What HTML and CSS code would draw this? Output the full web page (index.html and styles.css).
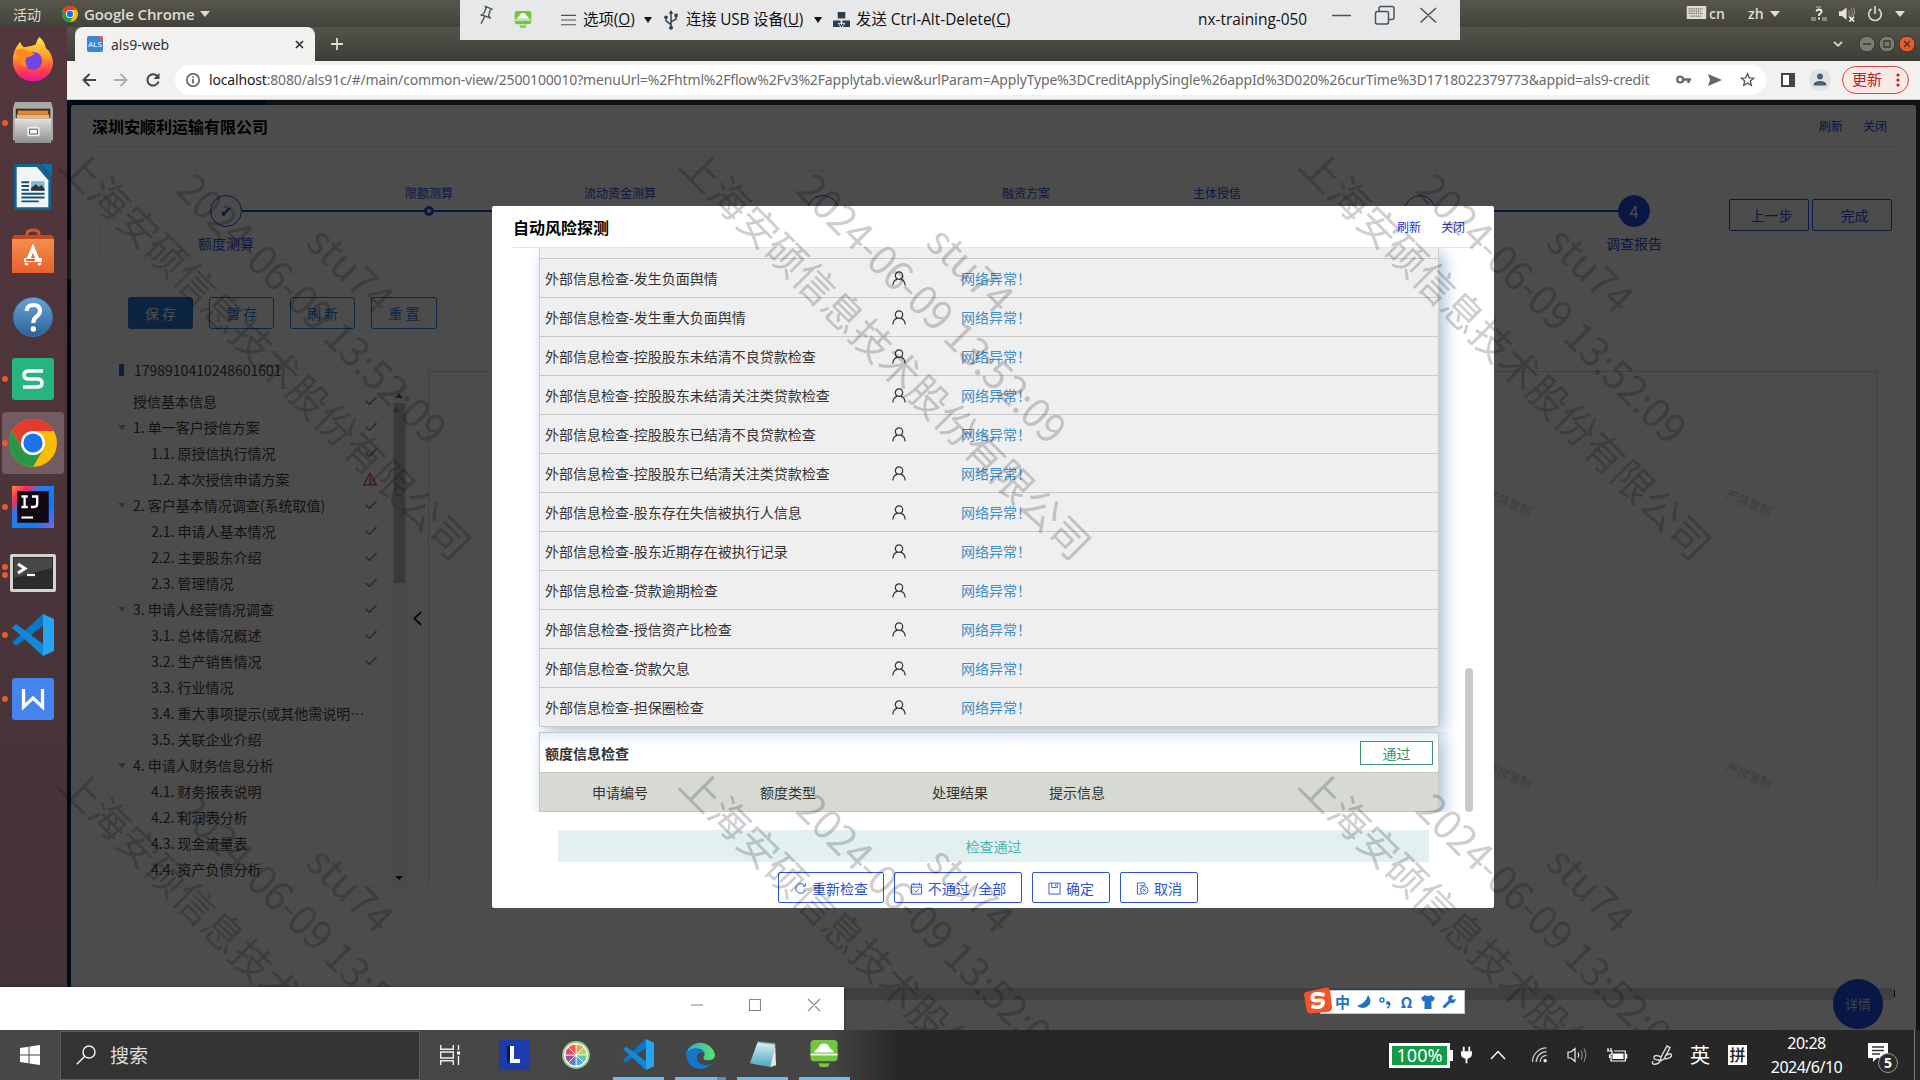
FILE: index.html
```html
<!DOCTYPE html>
<html lang="zh-CN">
<head>
<meta charset="utf-8">
<title>als9-web</title>
<link rel="stylesheet" href="styles.css">
</head>
<body>
<svg class="defs" width="0" height="0" aria-hidden="true">
  <defs>
    <linearGradient id="g-fire" x1="0" y1="0" x2="0" y2="1"><stop offset="0" stop-color="#ffe94a"/><stop offset=".45" stop-color="#ff9a26"/><stop offset=".75" stop-color="#ff3f4f"/><stop offset="1" stop-color="#e8159a"/></linearGradient>
    <linearGradient id="g-metal" x1="0" y1="0" x2="0" y2="1"><stop offset="0" stop-color="#e2e2e0"/><stop offset="1" stop-color="#8f8f8d"/></linearGradient>
    <linearGradient id="g-bag" x1="0" y1="0" x2="0" y2="1"><stop offset="0" stop-color="#f0904f"/><stop offset="1" stop-color="#e9612a"/></linearGradient>
    <linearGradient id="g-help" x1="0" y1="0" x2="0" y2="1"><stop offset="0" stop-color="#6aa3dc"/><stop offset="1" stop-color="#2b6396"/></linearGradient>
    <linearGradient id="g-ij" x1="0" y1="0" x2="1" y2="1"><stop offset="0" stop-color="#ff8a4a"/><stop offset=".2" stop-color="#fe2857"/><stop offset=".35" stop-color="#2a7bf0"/><stop offset=".7" stop-color="#087cfa"/><stop offset="1" stop-color="#8d5fe0"/></linearGradient>
    <linearGradient id="g-edge" x1="0" y1="0" x2="1" y2="0"><stop offset="0" stop-color="#2aa6e0"/><stop offset="1" stop-color="#5fe06b"/></linearGradient>
    <linearGradient id="g-pad" x1="0" y1="0" x2="0" y2="1"><stop offset="0" stop-color="#d9f1f5"/><stop offset="1" stop-color="#4aa8bb"/></linearGradient>
    <symbol id="i-chrome" viewBox="0 0 48 48">
      <circle cx="24" cy="24" r="24" fill="#fbbc05"/>
      <path d="M3.2 12A24 24 0 0 1 44.8 12H24A12 12 0 0 0 13.6 30z" fill="#e33b2e"/>
      <path d="M3.2 12A24 24 0 0 0 24 48L34.4 30A12 12 0 0 1 13.6 30z" fill="#2a9547"/>
      <circle cx="24" cy="24" r="12" fill="#fff"/><circle cx="24" cy="24" r="9.6" fill="#1a73e8"/>
    </symbol>
    <symbol id="i-vscode" viewBox="0 0 42 42">
      <path d="M31 0 6 23 0 28 4 32 31 12z" fill="#0a77c2"/>
      <path d="M0 14 4 10 31 30V42L6 19z" fill="#1388d6"/>
      <path d="M31 0 42 5V37L31 42z" fill="#26a4f2"/>
    </symbol>
    <symbol id="i-user" viewBox="0 0 14 15">
      <circle cx="7" cy="4.6" r="3.7" fill="none" stroke="#333" stroke-width="1.2"/>
      <path d="M.8 14.5Q1.2 9.3 5 8.3M13.2 14.5Q12.8 9.3 9 8.3" fill="none" stroke="#333" stroke-width="1.2"/>
    </symbol>
    <symbol id="i-tick" viewBox="0 0 12 10"><path d="M.5 4.5 4.2 8.5 11.5 1" fill="none" stroke="#3c9a6c" stroke-width="1.2"/></symbol>
    <symbol id="i-warn" viewBox="0 0 14 14"><path d="M7 1.2 13.3 12.8H.7zM7 5v4.2M7 10.2v1.3" fill="none" stroke="#d8403a" stroke-width="1.2"/></symbol>
    <symbol id="i-monitor" viewBox="0 0 28 30">
      <rect x="0" y="0" width="28" height="22" rx="4" fill="#73c63e"/><path d="M4 13C4 10 7 10 8 8 10 2 18 2 20 8 21 10 24 10 24 13z" fill="#fff"/>
      <rect y="14" width="28" height="2" fill="#e9f7df"/><path d="M8 24H20L18 28H10z" fill="#73c63e"/>
    </symbol>
  </defs>
</svg>

<div class="screen">
  <header class="topbar">
    <span class="activities">活动</span>
    <svg class="tb-chrome"><use href="#i-chrome"/></svg>
    <b class="app-name">Google Chrome</b>
    <i class="tri"></i>
    <span class="grow"></span>
    <svg class="kbd" viewBox="0 0 21 14"><rect width="21" height="14" fill="#dfdbd2"/><path d="M2 3h15M2 5.500h13M2 8h15M4 11h12" stroke="#6a685e" stroke-width="1.300" stroke-dasharray="1.200 .8"/></svg>
    <span class="ind cn">cn</span>
    <span class="ind zh">zh</span>
    <i class="tri t2"></i>
    <svg class="net" viewBox="0 0 16 15"><path d="M0 11h5v4H0zM11 11h5v4h-5zM5 0h5v2H5z" fill="#8b897f"/><path d="M5.500 5.500Q5.500 3.500 8 3.500T10.500 5.700Q10.500 7 8 8.500V10M8 11.500v2" fill="none" stroke="#eee" stroke-width="1.800"/></svg>
    <svg class="vol" viewBox="0 0 18 16"><path d="M0 5h3l5-4v13l-5-4H0z" fill="#e6e2da"/><path d="M10 4q2 3 0 7M12.500 2q3 5 0 9M15 1q3 5 0 9" fill="none" stroke="#8b897f" stroke-width="1.300"/><path d="M11 11l5 5M16 11l-5 5" stroke="#fff" stroke-width="1.600"/></svg>
    <svg class="pow" viewBox="0 0 16 16"><path d="M4.500 3A6.300 6.300 0 1 0 11.500 3M8 0V8" fill="none" stroke="#dfdbd2" stroke-width="1.600"/></svg>
    <i class="tri t3"></i>
  </header>

  <div class="desk">
    <nav class="dock">
      <div class="app"><svg viewBox="0 0 46 48"><path d="M30 0Q36 5 37 12Q44 17 45 28A22 21 0 0 1 1 27Q0 15 9 5Q10 9 13 11Q24 9 26 8Q27 3 30 0z" fill="url(#g-fire)"/><circle cx="23" cy="26" r="10" fill="#7543e0"/><path d="M2 16Q8 11 15 14Q20 16 25 18Q21 22 16 22Q13 27 17 33Q8 31 7 22z" fill="#ff8a1f"/></svg></div>
      <div class="app"><u></u><svg viewBox="0 0 44 46"><path d="M3 1H41L43 8V41H1V8z" fill="#a9a9a6"/><rect x="4" y="8" width="36" height="14" fill="#3a2a20"/><path d="M6 10h32v4H6z" fill="#e88435"/><path d="M5 14h34v4H5z" fill="#f3b268"/><path d="M3 18H41V44H3z" fill="url(#g-metal)"/><rect x="16" y="27" width="13" height="10" rx="2" fill="#ededeb"/><rect x="18.500" y="29.500" width="8" height="5" fill="#fff" stroke="#555"/></svg></div>
      <div class="app"><svg viewBox="0 0 42 48"><path d="M2 0H28L40 13V46Q40 48 38 48H3Q1 48 1 46V1z" fill="#12628f"/><path d="M4 3H25L37 17V45H4z" fill="#f2f5f7"/><path d="M29 0H41V13z" fill="#0a70ab"/><path d="M9 19h8M9 23h8M9 27h8M9 31h24M9 35h24M9 39h18" stroke="#174f70" stroke-width="2"/><rect x="19" y="18" width="14" height="10" fill="#7fb9da"/><path d="M19 28v-3l5-4 3 3 3-2 3 4v2z" fill="#333"/></svg></div>
      <div class="app"><svg viewBox="0 0 42 44"><path d="M15 14V5Q15 1 21 1T27 5V14" fill="none" stroke="#d4572a" stroke-width="3"/><path d="M2 6H40L42 10V44H0V10z" fill="#c4471d"/><path d="M0 10H42V44H0z" fill="url(#g-bag)"/><path d="M16 31 21 19 26 31M14 36l1-2M28 36l-1-2" fill="none" stroke="#fff" stroke-width="3.500"/><path d="M12 31H30" stroke="#fff" stroke-width="4"/><path d="M14 31H23" stroke="#e9612a" stroke-width="2"/></svg></div>
      <div class="app low"><svg viewBox="0 0 42 42"><circle cx="21" cy="21" r="19.500" fill="url(#g-help)" stroke="#3d74a8"/><path d="M14.500 15Q15 9 21.500 9T28 15Q28 18 24.500 20.500T21.500 27" fill="none" stroke="#fff" stroke-width="4"/><circle cx="21.300" cy="33" r="2.700" fill="#fff"/></svg></div>
      <div class="app"><u></u><svg viewBox="0 0 42 42"><rect width="42" height="42" rx="3" fill="#26b580"/><path d="M31 13H17Q12 13 12 17T17 21H25Q30 21 30 25T25 29H11" fill="none" stroke="#fff" stroke-width="3.500"/></svg></div>
      <div class="app on"><u></u><svg class="big"><use href="#i-chrome"/></svg></div>
      <div class="app"><u></u><svg viewBox="0 0 40 40"><rect width="40" height="40" fill="url(#g-ij)"/><rect x="5" y="5" width="30" height="30" fill="#120812"/><path d="M9 10h6M12 10v10M9 20h6M19 10h5v7q0 3-3 3h-3" fill="none" stroke="#fff" stroke-width="2.200"/><path d="M9 30h11" stroke="#fff" stroke-width="2"/></svg></div>
      <div class="app low"><u class="two"></u><svg class="term" viewBox="0 0 46 38"><rect width="46" height="38" rx="2" fill="#d3d3d0"/><rect x="3" y="3" width="40" height="32" fill="#2a2b2a"/><path d="M4 4H42V14L4 24z" fill="#474846"/><path d="M8 10l7 4.500-7 4.500" fill="none" stroke="#fff" stroke-width="3"/><path d="M17 21h8" stroke="#fff" stroke-width="2.200"/></svg></div>
      <div class="app"><u></u><svg class="mid"><use href="#i-vscode"/></svg></div>
      <div class="app"><u></u><svg viewBox="0 0 42 42"><rect width="42" height="42" rx="3" fill="#4584ee"/><path d="M11.500 11V29L21 20 30.500 29V11" fill="none" stroke="#fff" stroke-width="3.300"/></svg></div>
    </nav>

    <main class="browser">
      <div class="tabstrip">
        <div class="tab">
          <div class="fav">ALS</div>
          <span class="tab-title">als9-web</span>
          <svg class="tab-x" viewBox="0 0 9 9"><path d="M1 1l7 7M8 1l-7 7" stroke="#333" stroke-width="1.700"/></svg>
        </div>
        <svg class="newtab" viewBox="0 0 12 12"><path d="M6 0v12M0 6h12" stroke="#dedcd6" stroke-width="1.800"/></svg>
        <span class="grow"></span>
        <svg class="chev" viewBox="0 0 10 6"><path d="M1 .8 5 4.800 9 .8" fill="none" stroke="#dedcd6" stroke-width="1.800"/></svg>
        <svg class="wbtns" viewBox="0 0 58 18"><g stroke="#33322d"><circle cx="9" cy="9" r="8" fill="#7b7a72"/><circle cx="29" cy="9" r="8" fill="#7b7a72"/><circle cx="49" cy="9" r="8" fill="#ea5b2b"/></g><path d="M5 9h8M26 6h6v6h-6zM46 6l6 6M52 6l-6 6" fill="none" stroke="#3a3933" stroke-width="1.300"/></svg>
      </div>
      <div class="toolbar">
        <svg class="nav" viewBox="0 0 14 14"><path d="M14 7H2M7.500 1 1.500 7l6 6" fill="none" stroke="#444" stroke-width="2"/></svg>
        <svg class="nav" viewBox="0 0 14 14"><path d="M0 7H12M6.500 1l6 6-6 6" fill="none" stroke="#aaa" stroke-width="1.800"/></svg>
        <svg class="nav" viewBox="0 0 14 14"><path d="M11.800 3.600A5.700 5.700 0 1 0 12.600 8.500" fill="none" stroke="#444" stroke-width="2"/><path d="M13.500 0V6H7.500z" fill="#444"/></svg>
        <div class="omni">
          <svg class="info" viewBox="0 0 14 14"><circle cx="7" cy="7" r="6.200" fill="none" stroke="#555" stroke-width="1.500"/><path d="M7 6v4.500M7 3.300v1.500" stroke="#555" stroke-width="1.600"/></svg>
          <span class="url"><em>localhost</em>:8080/als91c/#/main/common-view/2500100010?menuUrl=%2Fhtml%2Fflow%2Fv3%2Fapplytab.view&amp;urlParam=ApplyType%3DCreditApplySingle%26appId%3D020%26curTime%3D1718022379773&amp;appid=als9-credit</span>
          <span class="grow"></span>
          <svg class="key" viewBox="0 0 15 9"><circle cx="4.200" cy="4.500" r="3" fill="none" stroke="#666" stroke-width="2.200"/><path d="M7 4.500h8M12.500 4.500v3.500" stroke="#666" stroke-width="2.400"/></svg>
          <svg class="send" viewBox="0 0 14 12"><path d="M0 0 14 6 0 12 2 6z" fill="#666"/></svg>
          <svg class="star" viewBox="0 0 16 15"><path d="M8 1.200 9.900 5.700l4.700.4-3.600 3.100 1.100 4.600L8 11.300l-4.100 2.500L5 9.200 1.400 6.100l4.700-.4z" fill="none" stroke="#555" stroke-width="1.400"/></svg>
        </div>
        <svg class="side" viewBox="0 0 14 14"><path d="M1 1H13V13H1z" fill="#fff" stroke="#444" stroke-width="2"/><path d="M8 0h6v14H8z" fill="#444"/></svg>
        <svg class="ava" viewBox="0 0 22 22"><circle cx="11" cy="11" r="11" fill="#dfe3e8"/><circle cx="11" cy="7.500" r="3" fill="#4d5d73"/><path d="M4.500 16.500Q4.500 12 11 12T17.500 16.500z" fill="#4d5d73"/></svg>
        <div class="update"><span>更新</span><svg viewBox="0 0 4 14"><circle cx="2" cy="2" r="1.600"/><circle cx="2" cy="7" r="1.600"/><circle cx="2" cy="12" r="1.600"/></svg></div>
      </div>

      <section class="page">
        <div class="navy-top"></div><div class="gap-left"></div>
        <div class="card">
          <div class="card-head"><h1>深圳安顺利运输有限公司</h1><a>刷新</a><a>关闭</a></div>
          <div class="steps">
            <div class="step"><div class="dot">✔</div><label>额度测算</label></div>
            <div class="seg"><div class="node"><label>限额测算</label><i></i></div><div class="node"><label>流动资金测算</label><i></i></div></div>
            <div class="step"><div class="dot">✔</div></div>
            <div class="seg"><div class="node"><label>融资方案</label><i></i></div><div class="node"><label>主体授信</label><i></i></div></div>
            <div class="step"><div class="dot">✔</div></div>
            <div class="seg short"></div>
            <div class="step"><div class="dot full">4</div><label>调查报告</label></div>
            <button class="sbtn">上一步</button><button class="sbtn">完成</button>
          </div>
          <div class="acts"><button class="fill">保 存</button><button>暂 存</button><button>刷 新</button><button>重 置</button></div>
          <div class="cols">
            <aside class="tree">
              <div class="tree-head"><i></i>1798910410248601601</div>
              <ul>
                <li><span>授信基本信息</span><svg><use href="#i-tick"/></svg></li>
                <li class="open"><span>1. 单一客户授信方案</span><svg><use href="#i-tick"/></svg></li>
                <li class="sub"><span>1.1. 原授信执行情况</span><svg><use href="#i-tick"/></svg></li>
                <li class="sub"><span>1.2. 本次授信申请方案</span><svg class="w"><use href="#i-warn"/></svg></li>
                <li class="open"><span>2. 客户基本情况调查(系统取值)</span><svg><use href="#i-tick"/></svg></li>
                <li class="sub"><span>2.1. 申请人基本情况</span><svg><use href="#i-tick"/></svg></li>
                <li class="sub"><span>2.2. 主要股东介绍</span><svg><use href="#i-tick"/></svg></li>
                <li class="sub"><span>2.3. 管理情况</span><svg><use href="#i-tick"/></svg></li>
                <li class="open"><span>3. 申请人经营情况调查</span><svg><use href="#i-tick"/></svg></li>
                <li class="sub"><span>3.1. 总体情况概述</span><svg><use href="#i-tick"/></svg></li>
                <li class="sub"><span>3.2. 生产销售情况</span><svg><use href="#i-tick"/></svg></li>
                <li class="sub"><span>3.3. 行业情况</span></li>
                <li class="sub"><span>3.4. 重大事项提示(或其他需说明…</span></li>
                <li class="sub"><span>3.5. 关联企业介绍</span></li>
                <li class="open"><span>4. 申请人财务信息分析</span></li>
                <li class="sub"><span>4.1. 财务报表说明</span></li>
                <li class="sub"><span>4.2. 利润表分析</span></li>
                <li class="sub"><span>4.3. 现金流量表</span></li>
                <li class="sub"><span>4.4. 资产负债分析</span></li>
              </ul>
              <div class="sbar"><i class="up"></i><i class="thumb"></i><i class="down"></i></div>
            </aside>
            <div class="fold"><svg viewBox="0 0 10 16"><path d="M9 1 1.500 8 9 15" fill="none" stroke="#000" stroke-width="1.800"/></svg></div>
            <div class="pane"></div>
          </div>
          <div class="hbar"></div>
        </div>
        <span class="nocopy n1">严禁复制</span><span class="nocopy n2">严禁复制</span><span class="nocopy n3">严禁复制</span><span class="nocopy n4">严禁复制</span>
        <div class="detail">详情</div>
        <i class="caret"></i>
        <div class="mask"></div>
      </section>
    </main>
  </div>

  <footer class="taskbar">
    <svg class="win" viewBox="0 0 20 20"><path d="M0 3 8.500 1.800V9.500H0zM9.500 1.600 20 0V9.500H9.500zM0 10.500H8.500V18.200L0 17zM9.500 10.500H20V20L9.500 18.400z" fill="#fff"/></svg>
    <div class="search"><svg viewBox="0 0 20 20"><circle cx="13" cy="7" r="6" fill="none" stroke="#eee" stroke-width="1.500"/><path d="M8.800 11.300 .8 19.300" stroke="#eee" stroke-width="1.500"/></svg><span>搜索</span></div>
    <svg class="tview" viewBox="0 0 20 20"><path d="M.7 0V4.300H13.300V0M.7 20V15.700H13.300V20M.7 7H13.300V13H.7zM18.500 0V5M18.500 11V20" fill="none" stroke="#eee" stroke-width="1.400"/><path d="M17 6.500h3v3h-3z" fill="#fff"/></svg>
    <svg class="t1" viewBox="0 0 30 30"><rect width="30" height="30" fill="#1c3cab"/><path d="M8 6H13V19L8 24z" fill="#0b1a52"/><path d="M13 6V21H21" fill="none" stroke="#fff" stroke-width="4"/></svg>
    <svg class="t2i" viewBox="0 0 28 28"><circle cx="14" cy="14" r="13" fill="#f5f5f0" stroke="#8fce83" stroke-width="1.800"/><g stroke="#fff" stroke-width=".8"><path d="M14 14V3A11 11 0 0 1 21.800 6.200z" fill="#f5a04a"/><path d="M14 14 21.800 6.200A11 11 0 0 1 25 14z" fill="#b5d655"/><path d="M14 14H25A11 11 0 0 1 21.800 21.800z" fill="#62c3a6"/><path d="M14 14 21.800 21.800A11 11 0 0 1 14 25z" fill="#4fa8e0"/><path d="M14 14V25A11 11 0 0 1 6.200 21.800z" fill="#5a78cf"/><path d="M14 14 6.200 21.800A11 11 0 0 1 3 14z" fill="#a34f9f"/><path d="M14 14H3A11 11 0 0 1 6.200 6.200z" fill="#e0487c"/><path d="M14 14 6.200 6.200A11 11 0 0 1 14 3z" fill="#ef6149"/></g></svg>
    <div class="tk"><svg class="v"><use href="#i-vscode"/></svg></div>
    <div class="tk two"><svg viewBox="0 0 32 32"><path d="M1 15A15.500 15.500 0 0 1 31 16Q31 22 24 22Q19 22 19 19Q21 17 20 14Q17 9 10 10Q3 11 1 15z" fill="url(#g-edge)"/><path d="M1 15Q5 9 12 10Q18 11 20 15Q14 12 12 18Q12 26 21 27Q26 27 29 24Q24 31 16 31Q2 30 1 15z" fill="#1377cf"/></svg></div>
    <div class="tk"><svg viewBox="0 0 32 32"><path d="M11 3 29 5 24 29 3 25z" fill="url(#g-pad)"/><path d="M29 5 30 27 24 29z" fill="#e9e9e4"/><path d="M11 3 29 5" stroke="#888" stroke-width="2" stroke-dasharray="1.500 1.500"/></svg></div>
    <div class="tk"><svg class="m"><use href="#i-monitor"/></svg></div>
    <span class="grow"></span>
    <div class="batt">100%</div>
    <svg class="plug" viewBox="0 0 12 18"><path d="M3 0V5M9 0V5" stroke="#fff" stroke-width="2"/><path d="M0 5H12V8Q12 12 7 13V18H5V13Q0 12 0 8z" fill="#fff"/></svg>
    <svg class="upc" viewBox="0 0 16 10"><path d="M1 9 8 1.500 15 9" fill="none" stroke="#fff" stroke-width="1.400"/></svg>
    <svg class="wifi" viewBox="0 0 17 17"><path d="M1 16A15 15 0 0 1 16 1M5 16A11 11 0 0 1 16 5M9 16A7 7 0 0 1 16 9" fill="none" stroke="#ccc" stroke-width="1.300"/><circle cx="14.500" cy="14.500" r="1.800" fill="#fff"/></svg>
    <svg class="spk" viewBox="0 0 20 16"><path d="M1 5H4L8 1.500V14.500L4 11H1z" fill="none" stroke="#eee" stroke-width="1.200"/><path d="M11 5.500Q12.500 8 11 10.500" fill="none" stroke="#eee" stroke-width="1.200"/><path d="M14 3.500Q16.500 8 14 12.500M17 1.500Q20.500 8 17 14.500" fill="none" stroke="#888" stroke-width="1.200"/></svg>
    <svg class="b2" viewBox="0 0 20 14"><path d="M5.500 5.500H16.500V11H5.500z" fill="#fff"/><path d="M7 3H18.300V13H4V8M18.500 6.500h1.200v3.500h-1.200M1 0V3M4 0V3M0 3H5V5Q5 7 2.500 7V10" fill="none" stroke="#fff" stroke-width="1.200"/></svg>
    <svg class="pen" viewBox="0 0 20 20"><path d="M9 12 15 1 18 2.500 12 14 8.500 16zM13 11Q19 7 19.500 10T13 14M9 12Q3 9 2 12T7 15Q9 18 4 19T1 16" fill="none" stroke="#ddd" stroke-width="1.400"/></svg>
    <span class="ying">英</span>
    <span class="pin">拼</span>
    <div class="clock"><span>20:28</span><span>2024/6/10</span></div>
    <div class="note"><svg viewBox="0 0 20 19"><path d="M0 0H20V15H9L5 19V15H0z" fill="#fff"/><path d="M4 4h12M4 7.500h12M4 11h8" stroke="#333" stroke-width="1.300"/></svg><b>5</b></div>
    <i class="edge"></i>
  </footer>

  <div class="modal">
    <div class="m-head"><h2>自动风险探测</h2><a>刷新</a><a>关闭</a></div>
    <div class="m-scroll">
      <div class="tbl">
        <div class="row cut"></div>
        <div class="row"><span>外部信息检查-发生负面舆情</span><svg><use href="#i-user"/></svg><a>网络异常！</a></div>
        <div class="row"><span>外部信息检查-发生重大负面舆情</span><svg><use href="#i-user"/></svg><a>网络异常！</a></div>
        <div class="row"><span>外部信息检查-控股股东未结清不良贷款检查</span><svg><use href="#i-user"/></svg><a>网络异常！</a></div>
        <div class="row"><span>外部信息检查-控股股东未结清关注类贷款检查</span><svg><use href="#i-user"/></svg><a>网络异常！</a></div>
        <div class="row"><span>外部信息检查-控股股东已结清不良贷款检查</span><svg><use href="#i-user"/></svg><a>网络异常！</a></div>
        <div class="row"><span>外部信息检查-控股股东已结清关注类贷款检查</span><svg><use href="#i-user"/></svg><a>网络异常！</a></div>
        <div class="row"><span>外部信息检查-股东存在失信被执行人信息</span><svg><use href="#i-user"/></svg><a>网络异常！</a></div>
        <div class="row"><span>外部信息检查-股东近期存在被执行记录</span><svg><use href="#i-user"/></svg><a>网络异常！</a></div>
        <div class="row"><span>外部信息检查-贷款逾期检查</span><svg><use href="#i-user"/></svg><a>网络异常！</a></div>
        <div class="row"><span>外部信息检查-授信资产比检查</span><svg><use href="#i-user"/></svg><a>网络异常！</a></div>
        <div class="row"><span>外部信息检查-贷款欠息</span><svg><use href="#i-user"/></svg><a>网络异常！</a></div>
        <div class="row"><span>外部信息检查-担保圈检查</span><svg><use href="#i-user"/></svg><a>网络异常！</a></div>
      </div>
      <div class="tbl2">
        <div class="cap"><b>额度信息检查</b><span class="pass">通过</span></div>
        <div class="thead"><span>申请编号</span><span>额度类型</span><span>处理结果</span><span>提示信息</span></div>
      </div>
      <i class="m-thumb"></i>
    </div>
    <div class="result">检查通过</div>
    <div class="m-btns">
      <button class="k1"><svg viewBox="0 0 14 14"><path d="M11.500 4A5.200 5.200 0 1 0 12 9M12.300 1.500V4.500H9.300" fill="none" stroke="#2d55d6"/></svg>重新检查</button>
      <button class="k2"><svg viewBox="0 0 14 14"><path d="M1.500 2.500H12.500V13H1.500zM4 .8V3.500M10 .8V3.500M1.500 5.500H12.500M4.500 9 6.500 11 9.500 7.500" fill="none" stroke="#2d55d6"/></svg>不通过 /全部</button>
      <button class="k3"><svg viewBox="0 0 14 14"><path d="M1 1.200H13V13H1zM4 1.200V6H10V1.200M8 2.500V4.500" fill="none" stroke="#2d55d6"/></svg>确定</button>
      <button class="k3"><svg viewBox="0 0 14 14"><path d="M6 13H1.500V1H9L10 4M4 4H9M4 7H5" fill="none" stroke="#2d55d6"/><circle cx="9" cy="9" r="4" fill="none" stroke="#2d55d6"/><path d="M7.500 7.500l3 3M10.500 7.500l-3 3" stroke="#2d55d6"/></svg>取消</button>
    </div>
  </div>

  <div class="marks">
    <div class="mark c1 r1"><p>stu74</p><p>2024-06-09 13:52:09</p><p>上海安硕信息技术股份有限公司</p></div>
    <div class="mark c2 r1"><p>stu74</p><p>2024-06-09 13:52:09</p><p>上海安硕信息技术股份有限公司</p></div>
    <div class="mark c3 r1"><p>stu74</p><p>2024-06-09 13:52:09</p><p>上海安硕信息技术股份有限公司</p></div>
    <div class="mark c1 r2"><p>stu74</p><p>2024-06-09 13:52:09</p><p>上海安硕信息技术股份有限公司</p></div>
    <div class="mark c2 r2"><p>stu74</p><p>2024-06-09 13:52:09</p><p>上海安硕信息技术股份有限公司</p></div>
    <div class="mark c3 r2"><p>stu74</p><p>2024-06-09 13:52:09</p><p>上海安硕信息技术股份有限公司</p></div>
  </div>

  <div class="remote">
    <svg class="r-pin" viewBox="0 0 18 22"><path d="M9 1.500 16 4.500 14 6 12.500 11.500 14 14 4.500 11 7 9.500 9.500 4zM8 13 4 20.500" fill="none" stroke="#44555f" stroke-width="1.500"/></svg>
    <svg class="r-mon"><use href="#i-monitor"/></svg>
    <svg class="r-ham" viewBox="0 0 16 12"><path d="M0 1h16M0 6h16M0 11h16" stroke="#44555f" stroke-width="1.200"/></svg>
    <span class="r1t">选项(<u>O</u>)</span><i class="bt"></i>
    <svg class="r-usb" viewBox="0 0 16 22"><path d="M8 2V20M8 16 2.500 12V8M8 13 13.500 10V6" fill="none" stroke="#2d3f4c" stroke-width="1.600"/><path d="M8 0 10.500 4H5.500z" fill="#2d3f4c"/><circle cx="8" cy="19.500" r="2.200" fill="#2d3f4c"/><circle cx="2.500" cy="8" r="2" fill="#2d3f4c"/><rect x="11.800" y="4" width="3.600" height="3.600" fill="#2d3f4c"/></svg>
    <span class="r2t">连接 USB 设备(<u>U</u>)</span><i class="bt"></i>
    <svg class="r-cad" viewBox="0 0 18 18"><path d="M5 0H13V7H5zM0 9H8V16H0zM10 9H18V16H10z" fill="#2d3f4c"/><path d="M9 7V14M5.500 12 9 17 12.500 12z" fill="#2d3f4c" stroke="#e8e8e8"/></svg>
    <span class="r3t">发送 Ctrl-Alt-Delete(<u>C</u>)</span>
    <span class="grow"></span>
    <span class="host">nx-training-050</span>
    <svg class="r-w" viewBox="0 0 106 20"><path d="M0 10.500H19M47 6.500V3.500Q47 1.500 49 1.500H60Q62 1.500 62 3.500V12.500Q62 14.500 60 14.500H57M45.500 6.500H54.500Q56.500 6.500 56.500 8.500V17.500Q56.500 19 54.500 19H45.500Q43.500 19 43.500 17.500V8.500Q43.500 6.500 45.500 6.500zM88.500 3 104 17.500M104 3 88.500 17.500" fill="none" stroke="#44555f" stroke-width="1.500"/></svg>
  </div>

  <div class="blank">
    <svg viewBox="0 0 130 14"><path d="M0 7H12M58.500 1.500H69.500V12.500H58.500zM117 1 129 13M129 1 117 13" fill="none" stroke="#888" stroke-width="1.100"/></svg>
  </div>

  <div class="ime">
    <svg class="sg" viewBox="0 0 30 28"><path d="M2 5 24 0Q27 0 28 3L30 22Q30 25 27 26L7 28Q4 28 3 25L0 8Q0 6 2 5z" fill="#f0562a"/><path d="M22 8Q10 5 9 10T15 14T20 18T8 20" fill="none" stroke="#fff" stroke-width="4"/></svg>
    <b>中</b>
    <svg viewBox="0 0 14 14"><path d="M11 0Q9 8 0 11Q6 15 11 11T11 0z" fill="#2273c3"/></svg>
    <svg viewBox="0 0 14 14"><circle cx="4" cy="5" r="2" fill="none" stroke="#2273c3" stroke-width="1.400"/><circle cx="10" cy="8" r="2" fill="#2273c3"/><path d="M12 8Q12 11.500 9 13" fill="none" stroke="#2273c3" stroke-width="1.400"/></svg>
    <b>Ω</b>
    <svg viewBox="0 0 14 14"><path d="M4 0Q7 2 10 0L14 3 12 6.500 10.500 6V14H3.500V6L2 6.500 0 3z" fill="#2273c3"/></svg>
    <svg viewBox="0 0 14 14"><path d="M1.500 12.500 8.500 5.500" stroke="#2273c3" stroke-width="3"/><path d="M9 0 12 1 9.500 3 11 5 13.500 3.500Q14 7 11 8T6.500 5 9 0z" fill="#2273c3"/></svg>
  </div>
</div>
</body>
</html>
```
FILE: styles.css
```css
* { box-sizing: border-box; }
body { margin: 0; background: #222; font: 14px/20px "Noto Sans CJK SC", sans-serif; }
h1, h2, p, ul { margin: 0; padding: 0; }
button { font: inherit; padding: 0; background: none; }
svg { display: block; flex: none; overflow: visible; }
.defs { position: absolute; }
.grow { flex: 1; }
.screen { position: relative; width: 1920px; height: 1080px; overflow: hidden; display: flex; flex-direction: column; }

/* Desktop top bar */
.topbar { height: 27px; display: flex; align-items: center; background: linear-gradient(#57564c, #43423b); color: #dfdbd2; padding-left: 13px; padding-right: 15px; }
.activities { width: 49px; }
.tb-chrome { width: 16px; height: 16px; }
.app-name { font: 600 15px "Open Sans", sans-serif; margin-left: 6px; width: 111px; white-space: nowrap; letter-spacing: -.1px; }
.tri { border: 5px solid transparent; border-top: 6px solid #dfdbd2; border-bottom: 0; margin-left: 5px; }
.kbd { width: 21px; height: 13px; margin-bottom: 2px; }
.ind { font: 600 14px "Open Sans", sans-serif; }
.cn { margin-left: 2px; width: 39px; }
.zh { width: 22px; }
.t2 { margin-left: 0; }
.net { width: 16px; height: 15px; margin-left: 31px; }
.vol { width: 17px; height: 16px; margin-left: 12px; }
.pow { width: 16px; height: 16px; margin-left: 11px; }
.t3 { margin-left: 12px; }

.desk { height: 1003px; display: flex; }

/* Launcher */
.dock { width: 67px; background: linear-gradient(#53373c, #4a343a 55%, #423236); display: flex; flex-direction: column; }
.app { position: relative; height: 64px; width: 66px; display: flex; align-items: center; justify-content: center; }
.app svg { width: 42px; height: 46px; }
.app .big { width: 48px; height: 48px; }
.app .mid { width: 42px; height: 42px; }
.app .term { width: 46px; height: 38px; }
.app.low { padding-top: 3px; }
.app.on::before { content: ""; position: absolute; inset: 1px 2px; background: #735c61; border-radius: 4px; }
.app.on svg { position: relative; }
.app u { position: absolute; left: 2px; top: 29px; width: 6px; height: 6px; border-radius: 50%; background: #e9592b; }
.app u.two { top: 25px; box-shadow: 0 8px #e9592b; }

/* Browser */
.browser { flex: 1; display: flex; flex-direction: column; }
.tabstrip { height: 34px; display: flex; align-items: center; background: linear-gradient(#55544b, #3d3c36); padding: 0 4px 0 8px; }
.tab { width: 240px; height: 34px; border-radius: 8px 8px 0 0; background: #f2f1f0; display: flex; align-items: center; padding: 0 11px 0 12px; }
.fav { width: 16px; height: 16px; border-radius: 2px; background: linear-gradient(45deg, #3d85d6 80%, #d9584f 80%); color: #fff; font: 8px/16px "Open Sans", sans-serif; text-align: center; }
.tab-title { font: 14px "Noto Sans", sans-serif; color: #333; margin-left: 8px; flex: 1; }
.tab-x { width: 9px; height: 9px; }
.newtab { width: 12px; height: 12px; margin-left: 16px; }
.chev { width: 10px; height: 6px; margin-right: 15px; }
.wbtns { width: 58px; height: 18px; }
.toolbar { height: 39px; background: #f2f1f0; border-bottom: 1px solid #c9cdcf; display: flex; align-items: center; padding-left: 15px; padding-right: 11px; }
.nav { width: 14px; height: 14px; margin-right: 18px; }
.omni { margin-left: -3px; margin-top: -1px; width: 1591px; height: 30px; border-radius: 15px; background: #fff; display: flex; align-items: center; padding: 0 11px; }
.info { width: 14px; height: 14px; }
.url { font: 14px "Noto Sans", sans-serif; color: #6b6b6b; margin-left: 9px; white-space: nowrap; width: 1442px; letter-spacing: -.165px; }
.url em { font-style: normal; color: #222; }
.key { width: 15px; height: 9px; margin-right: 17px; }
.send { width: 14px; height: 12px; margin-right: 18px; }
.star { width: 15px; height: 15px; }
.side { width: 14px; height: 14px; margin-left: 15px; }
.ava { width: 22px; height: 22px; margin-left: 14px; }
.update { margin-left: 11px; width: 67px; height: 28px; border: 1px solid #cf4a41; border-radius: 14px; background: #fbe9e7; color: #b3261e; font-size: 15px; display: flex; align-items: center; padding-left: 9px; }
.update span { margin-top: -2px; }
.update svg { width: 4px; height: 14px; margin-left: 14px; fill: #b3261e; }

/* Page behind the mask */
.page { position: relative; flex: 1; background: #373f42; overflow: hidden; padding: 5px 4px 0; }
.navy-top { position: absolute; left: 0; top: 0; width: 200px; height: 930px; background: #00234b; }
.gap-left { position: absolute; left: 0; top: 140px; width: 4px; height: 39px; background: #555; }
.mask { position: absolute; inset: 0; background: rgba(0, 0, 0, .7); }
.card { position: relative; height: 925px; background: #fff; border-radius: 3px 3px 0 0; }
.card-head { margin: 0 21px; height: 42px; border-bottom: 1px solid #e6e6e6; display: flex; align-items: center; }
.card-head h1 { font-size: 16px; line-height: 24px; font-weight: 700; flex: 1; }
.card-head a { font-size: 12px; color: #2b3fe0; margin-right: 8px; margin-left: 12px; }
.steps { margin: 23px 21px 0 29px; height: 90px; border: 1px solid #efefef; display: flex; padding-left: 109px; color: #2b55e0; background: #fdfdfd; }
.step { width: 32px; padding-top: 24px; }
.dot { width: 32px; height: 32px; border-radius: 50%; border: 1px solid #2654e8; color: #1c46d8; font: 15px/33px "DejaVu Sans", sans-serif; text-align: center; }
.dot.full { background: #1c4de0; color: #fff; font: 16px/30px "Noto Sans CJK SC", sans-serif; }
.step label { display: block; width: 80px; margin: 6px 0 0 -24px; text-align: center; }
.seg { width: 565px; padding: 0 187px; display: flex; justify-content: space-between; background: linear-gradient(#2452e6, #2452e6) 0 39px / 100% 2px no-repeat; }
.seg.short { width: 182px; padding: 0; }
.node { width: 0; display: flex; flex-direction: column; align-items: center; padding-top: 12px; font-size: 12px; white-space: nowrap; }
.node i { width: 10px; height: 10px; border-radius: 50%; border: 3px solid #2452e6; background: #fff; margin-top: 3px; flex: none; }
.sbtn { width: 80px; height: 32px; border: 1px solid #2452e6; border-radius: 2px; color: #2452e6; margin: 28px 0 0 3px; padding-left: 5px; }
.step + .sbtn { margin-left: 79px; }
.acts { display: flex; gap: 16px; margin: 37px 0 0 57px; }
.acts button { width: 65px; height: 32px; border: 1px solid #2489f0; border-radius: 3px; color: #2489f0; }
.acts button:last-child { width: 66px; }
.acts .fill { background: #2878d8; border-color: #2878d8; color: #fff; }
.cols { display: flex; margin: 22px 0 0 37px; height: 536px; }
.tree { position: relative; width: 299px; border: 1px solid #f0f0f0; background: #fdfdfd; color: #444; }
.tree-head { height: 36px; border-bottom: 1px solid #efefef; display: flex; align-items: center; padding: 0 0 0 10px; gap: 10px; }
.tree-head i { width: 5px; height: 12px; background: #2373d8; }
.tree ul { list-style: none; }
.tree li { height: 26px; display: flex; align-items: center; padding-left: 24px; width: 268px; position: relative; white-space: nowrap; }
.tree li.sub { padding-left: 42px; }
.tree li span { flex: 1; }
.tree li svg { width: 12px; height: 10px; }
.tree li .w { width: 14px; height: 14px; }
.open::before { content: ""; position: absolute; left: 9px; top: 11px; border: 4px solid transparent; border-top: 5px solid #aaa; border-bottom: 0; }
.sbar { position: absolute; right: 0; top: 37px; bottom: 0; width: 14px; background: #f4f4f4; display: flex; flex-direction: column; align-items: center; }
.sbar .up { border: 4px solid transparent; border-bottom: 5px solid #666; border-top: 0; margin-top: 4px; }
.sbar .thumb { width: 11px; height: 180px; background: #bfbfbf; margin-top: 5px; }
.sbar .down { border: 4px solid transparent; border-top: 4px solid #222; border-bottom: 0; margin-top: auto; margin-bottom: 6px; }
.fold { width: 21px; padding: 260px 0 0 6px; }
.fold svg { width: 9px; height: 15px; }
.pane { width: 1449px; margin-top: 20px; border: 1px solid #d8d8d8; border-bottom: 0; }
.hbar { width: 1824px; height: 12px; background: #d2d2d2; margin-top: 101px; border-radius: 0 6px 6px 0; }
.nocopy { position: absolute; font-size: 12px; color: #cfcfcf; transform: rotate(22deg); }
.n1 { left: 1418px; top: 392px; } .n2 { left: 1658px; top: 392px; }
.n3 { left: 1418px; top: 665px; } .n4 { left: 1658px; top: 665px; }
.detail { position: absolute; left: 1766px; top: 879px; width: 50px; height: 50px; border-radius: 50%; background: #1c4de8; color: #d0d8f5; font-size: 13px; line-height: 49px; text-align: center; }
.caret { position: absolute; left: 1827px; top: 890px; width: 1px; height: 7px; background: #000; }

/* Risk dialog */
.modal { position: absolute; left: 492px; top: 206px; width: 1002px; height: 702px; background: #fff; border-radius: 2px; display: flex; flex-direction: column; color: #333; }
.m-head { height: 42px; flex: none; margin: 0 21px; border-bottom: 1px solid #e4e4e4; display: flex; align-items: center; }
.m-head h2 { font-size: 16px; line-height: 24px; flex: 1; color: #000; }
.m-head a { font-size: 12px; color: #2433d0; margin: 0 8px 0 12px; }
.m-scroll { position: relative; height: 564px; flex: none; overflow: hidden; padding-left: 47px; }
.tbl { width: 900px; border: 1px solid #ccc; border-width: 0 1px; background: #efefef; box-shadow: 5px 5px 15px #a9c0d9; }
.row { height: 39px; border-bottom: 1px solid #c8c8c8; display: flex; align-items: center; padding: 0 0 0 5px; }
.row.cut { height: 11px; }
.row span { width: 347px; }
.row svg { width: 14px; height: 15px; margin-top: 1px; }
.row a { margin-left: 55px; color: #3b8fca; }
.tbl2 { position: relative; width: 900px; margin-top: 5px; border: 1px solid #c6c9cc; border-bottom: 0; box-shadow: 5px 5px 15px #a9c0d9; clip-path: inset(0 -30px -30px -30px); }
.cap { height: 40px; border-bottom: 1px solid #c8c8c8; display: flex; align-items: center; justify-content: space-between; padding: 0 5px; background: linear-gradient(#e4edf5, #fff 12px); }
.pass { width: 73px; height: 24px; border: 1px solid #3a9170; color: #3a9170; text-align: center; line-height: 22px; background: #fff; }
.thead { height: 39px; border-bottom: 1px solid #c4c4c4; background: #d7d9d3; display: grid; grid-template-columns: 168px 172px 117px 1fr; padding: 9px 0 0 52px; }
.m-thumb { position: absolute; left: 973px; top: 420px; width: 8px; height: 144px; border-radius: 4px; background: #c9c9c9; }
.result { flex: none; margin: 18px 0 0 66px; width: 871px; height: 32px; background: #e2f1f0; color: #4eb5b0; text-align: center; line-height: 32px; }
.m-btns { display: flex; gap: 10px; margin: 10px 0 0 286px; }
.m-btns button { height: 31px; border: 1px solid #2d55d6; border-radius: 2px; color: #2d55d6; display: flex; align-items: center; justify-content: center; gap: 5px; }
.m-btns svg { width: 13px; height: 13px; margin-top: 1px; }
.k1 { width: 106px; } .k2 { width: 128px; } .k3 { width: 78px; }

/* Repeated user mark */
.marks { position: absolute; left: 0; top: 100px; width: 1920px; height: 930px; overflow: hidden; pointer-events: none; }
.mark { position: absolute; width: 600px; height: 190px; transform: rotate(45deg); color: rgba(0, 0, 0, .21); font-size: 40px; text-align: center; white-space: nowrap; }
.mark p { line-height: 60px; height: 60px; }
.mark p + p { margin-top: -5px; letter-spacing: -.5px; }
.mark p + p + p { margin-top: 5px; letter-spacing: 0; }
.c1 { left: 6px; } .c2 { left: 626px; } .c3 { left: 1246px; }
.r1 { top: 119px; } .r2 { top: 739px; }

/* Taskbar */
.taskbar { height: 50px; display: flex; align-items: center; background: linear-gradient(90deg, #484848 0, #454545 830px, #262626 900px, #272727 100%); color: #fff; }
.win { width: 20px; height: 20px; margin: 0 20px; }
.search { width: 360px; height: 49px; background: #333; border: 1px solid #5c5c5c; display: flex; align-items: center; padding-left: 15px; color: #ddd; font-size: 19px; gap: 14px; }
.search svg { width: 20px; height: 20px; }
.tview { width: 20px; height: 20px; margin: 0 39px 0 20px; }
.t1 { width: 30px; height: 30px; margin-right: 33px; }
.t2i { width: 28px; height: 28px; margin-right: 23px; }
.tk { width: 51px; height: 50px; margin-right: 11px; border-bottom: 3px solid #76b9ed; padding: 9px 0 0 10px; }
.tk.two { border-image: linear-gradient(90deg, #76b9ed 40px, #5b8fb8 40px) 3; border-width: 0 0 3px; border-style: solid; }
.tk svg { width: 31px; height: 31px; }
.tk .m { width: 28px; height: 29px; margin: 1px; }
.batt { position: relative; width: 61px; height: 25px; border: 3px solid #fff; background: #159a48; font: 18px/18px "Noto Sans", sans-serif; text-align: center; margin-right: 11px; }
.batt::after { content: ""; position: absolute; left: 58px; top: 4px; width: 3px; height: 11px; background: #fff; }
.plug { width: 11px; height: 18px; margin-right: 18px; }
.upc { width: 16px; height: 10px; margin-right: 25px; }
.wifi { width: 17px; height: 16px; margin-right: 19px; }
.spk { width: 20px; height: 16px; margin-right: 20px; }
.b2 { width: 20px; height: 14px; margin-right: 25px; }
.pen { width: 20px; height: 20px; margin-right: 18px; }
.ying { font-size: 20px; width: 20px; margin-right: 18px; }
.pin { width: 19px; height: 20px; background: #fff; color: #222; font: 500 16px/19px "Noto Sans CJK SC"; text-align: center; margin-right: 21px; }
.clock { width: 77px; display: flex; flex-direction: column; align-items: center; font: 16px/24px "Noto Sans", sans-serif; letter-spacing: -.5px; margin-right: 23px; }
.note { position: relative; width: 20px; height: 19px; margin: 0 26px 6px 0; }
.note svg { width: 20px; height: 19px; }
.note b { position: absolute; left: 10px; top: 10px; width: 20px; height: 20px; border: 1px solid #999; border-radius: 50%; background: #2b2b2b; font: 700 14px/18px "Noto Sans", sans-serif; text-align: center; }
.edge { width: 1px; height: 50px; background: #777; margin-right: 5px; }

/* Remote session bar */
.remote { position: absolute; left: 460px; top: 0; width: 1000px; height: 40px; background: #e8e8e8; color: #111; display: flex; align-items: center; padding-left: 17px; padding-right: 22px; }
.remote span { white-space: nowrap; flex: none; }
.remote .grow { flex: 1; }
.r-pin { width: 17px; height: 20px; margin: 0 20px 10px 0; }
.r-mon { width: 18px; height: 18px; margin-right: 29px; }
.r-ham { width: 15px; height: 12px; margin-right: 7px; }
.r1t, .r2t, .r3t, .host { font: 15.4px/24px "Open Sans", "Noto Sans CJK SC", sans-serif; }
.r1t { width: 53px; }
.r2t { width: 120px; letter-spacing: -.2px; }
.r3t { width: 153px; }
.bt { border: 4.5px solid transparent; border-top: 6px solid #111; border-bottom: 0; margin: 0 11px 0 8px; }
.r-usb { width: 16px; height: 20px; margin-right: 7px; }
.r-cad { width: 17px; height: 17px; margin-right: 6px; }
.host { width: 112px; margin-right: 22px; }
.r-w { width: 106px; height: 20px; margin-bottom: 10px; }

.blank { position: absolute; left: 0; top: 987px; width: 844px; height: 43px; background: #fff; box-shadow: 0 0 2px #222; clip-path: inset(-3px -3px 0 0); padding: 11px 0 0 691px; }
.blank svg { width: 130px; height: 14px; }

.ime { position: absolute; left: 1320px; top: 990px; width: 145px; height: 24px; background: #fff; border: 1px solid #b8c8d4; color: #2273c3; display: flex; align-items: center; gap: 7px; padding-left: 14px; }
.ime svg { width: 14px; height: 14px; }
.ime b { width: 15px; font-size: 15px; line-height: 20px; text-align: center; font-weight: 700; }
.ime .sg { position: absolute; left: -17px; top: -4px; width: 28px; height: 27px; }
```
